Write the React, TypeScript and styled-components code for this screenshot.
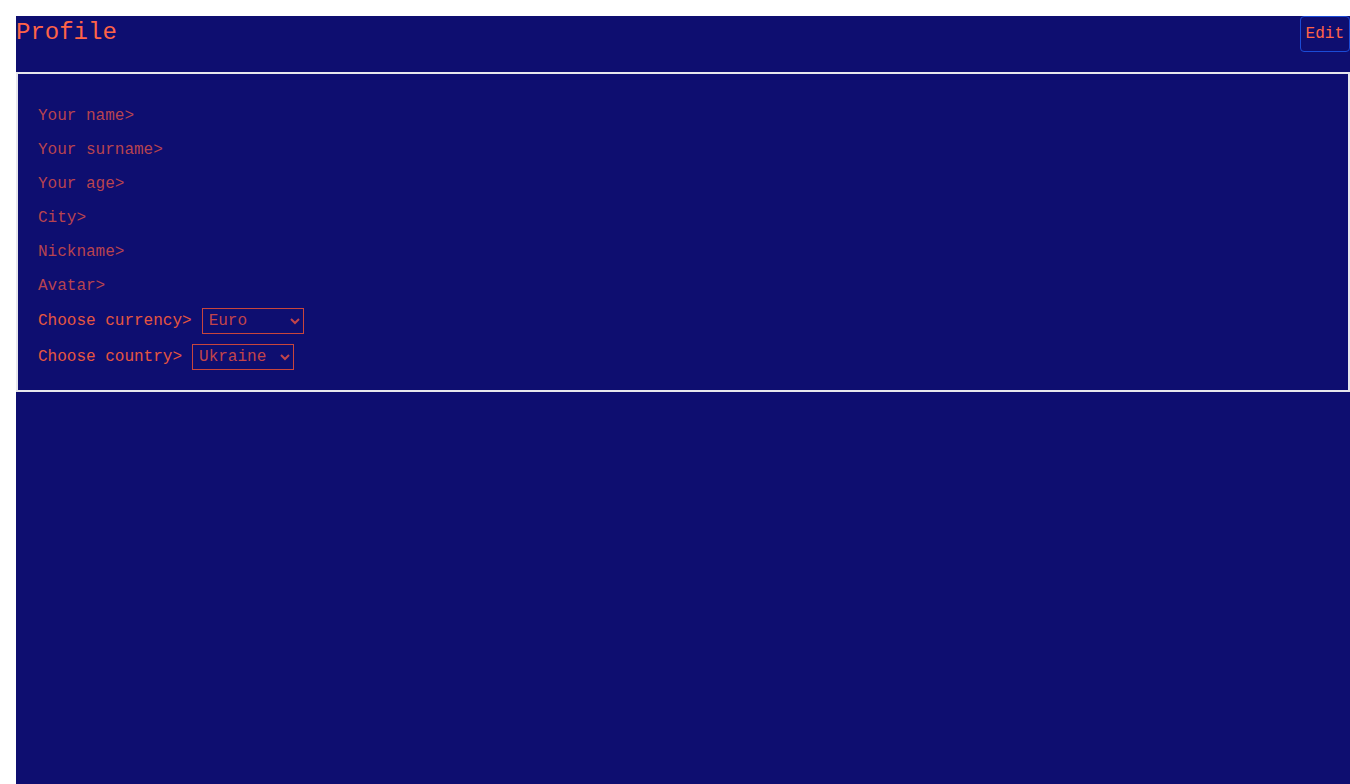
import React from "react";
import styled, { createGlobalStyle } from "styled-components";

const Global = createGlobalStyle`
  html, body { margin: 0; padding: 0; background: #ffffff; }
  body { padding: 16px 0 0 16px; font-family: "Liberation Mono", monospace; }
`;

const Page = styled.div`
  background: #0e0e70;
  min-height: calc(100vh - 16px);
  display: flex;
  flex-direction: column;
`;

const Header = styled.header`
  height: 56px;
  display: flex;
  justify-content: space-between;
  align-items: flex-start;
`;

const Title = styled.h1`
  margin: 0;
  font-family: "Liberation Mono", monospace;
  font-weight: normal;
  font-size: 24px;
  line-height: 34px;
  color: #ff6347;
`;

const EditButton = styled.button`
  height: 36px;
  padding: 0 5px;
  background: transparent;
  border: 1px solid #1b4bd6;
  border-radius: 4px;
  font-family: "Liberation Mono", monospace;
  font-size: 16px;
  color: #ff6347;
  cursor: pointer;
`;

const Card = styled.section`
  border: 2px solid #e6e6ec;
  padding: 33px 20px 20px;
  display: flex;
  flex-direction: column;
`;

const Label = styled.div`
  font-size: 16px;
  line-height: 18px;
  height: 18px;
  margin-bottom: 16px;
  color: #b8434f;
`;

const SelectGroup = styled.div`
  margin-top: -3px;
  display: flex;
  flex-direction: column;
  gap: 10px;
`;

const SelectRow = styled.label`
  display: flex;
  align-items: center;
  gap: 10px;
  height: 26px;
  font-size: 16px;
  color: #e6563f;
`;

const Select = styled.select`
  width: 102px;
  height: 26px;
  box-sizing: border-box;
  background: transparent;
  border: 1px solid #c8453c;
  border-radius: 0;
  padding: 0 2px 0 2px;
  font-family: "Liberation Mono", monospace;
  font-size: 16px;
  color: #c2444a;
  outline: none;
`;

const fields = ["Your name>", "Your surname>", "Your age>", "City>", "Nickname>", "Avatar>"];

export default function App() {
  return (
    <>
      <Global />
      <Page>
        <Header>
          <Title>Profile</Title>
          <EditButton>Edit</EditButton>
        </Header>
        <Card>
          {fields.map((f) => (
            <Label key={f}>{f}</Label>
          ))}
          <SelectGroup>
            <SelectRow>
              Choose currency&gt;
              <Select defaultValue="euro">
                <option value="euro">Euro</option>
                <option value="usd">Dollar</option>
                <option value="uah">Hryvnia</option>
              </Select>
            </SelectRow>
            <SelectRow>
              Choose country&gt;
              <Select defaultValue="ua">
                <option value="ua">Ukraine</option>
                <option value="pl">Poland</option>
                <option value="de">Germany</option>
              </Select>
            </SelectRow>
          </SelectGroup>
        </Card>
      </Page>
    </>
  );
}
